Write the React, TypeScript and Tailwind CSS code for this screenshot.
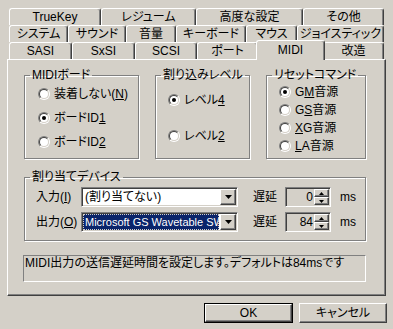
import React from "react";

const base =
  "[font-family:'Liberation_Sans','Noto_Sans_CJK_JP',sans-serif] [font-feature-settings:'palt'] text-[12px] leading-[14px] text-black";

const tabCls =
  "flex items-center justify-center bg-[#d4d0c8] border-t border-l border-white border-r border-r-[#404040] rounded-t-[3px] shadow-[inset_-1px_0_#808080] whitespace-nowrap";

function Tab({ w, label }: { w: string; label: string }) {
  return <div className={`h-[17px] ${w} ${tabCls}`}>{label}</div>;
}

function SelTab({ w, label }: { w: string; label: string }) {
  return (
    <div className={`relative z-10 -mx-[2px] -mb-[1px] h-[20px] pb-[2px] ${w} ${tabCls}`}>
      {label}
    </div>
  );
}

function Radio({ checked }: { checked?: boolean }) {
  return (
    <span className="w-[12px] h-[12px] shrink-0 flex rounded-full border border-t-[#808080] border-l-[#808080] border-b-white border-r-white">
      <span className="flex-1 flex items-center justify-center rounded-full border border-t-[#404040] border-l-[#404040] border-b-[#d4d0c8] border-r-[#d4d0c8] bg-white">
        {checked && <span className="w-[4px] h-[4px] rounded-full bg-black" />}
      </span>
    </span>
  );
}

function RadioRow({ checked, children }: { checked?: boolean; children: React.ReactNode }) {
  return (
    <div className="h-[16px] flex items-center gap-[4px] whitespace-nowrap">
      <Radio checked={checked} />
      <span>{children}</span>
    </div>
  );
}

const groupCls =
  "border border-[#808080] shadow-[inset_1px_1px_#ffffff,1px_1px_#ffffff] p-0 m-0 min-w-0";

function Legend({ children }: { children: React.ReactNode }) {
  return <legend className="ml-[5px] px-[2px] leading-[12px] whitespace-nowrap">{children}</legend>;
}

function Tri({ w, h }: { w: number; h: number }) {
  return (
    <svg width={w} height={h} viewBox={`0 0 ${w} ${h}`} className="block">
      <polygon points={`0,0 ${w},0 ${w / 2},${h}`} fill="#000" />
    </svg>
  );
}

function TriUp({ w, h }: { w: number; h: number }) {
  return (
    <svg width={w} height={h} viewBox={`0 0 ${w} ${h}`} className="block">
      <polygon points={`0,${h} ${w},${h} ${w / 2},0`} fill="#000" />
    </svg>
  );
}

const raised =
  "bg-[#d4d0c8] border border-t-white border-l-white border-b-[#404040] border-r-[#404040] shadow-[inset_-1px_-1px_#808080]";

const sunken =
  "border border-t-[#808080] border-l-[#808080] border-b-white border-r-white shadow-[inset_1px_1px_#404040,inset_-1px_-1px_#d4d0c8]";

function Combo({ text, selected }: { text: string; selected?: boolean }) {
  return (
    <div className={`w-[157px] h-[20px] bg-white ${sunken} p-[1px] flex`}>
      <div className="flex-1 flex items-center overflow-hidden whitespace-nowrap pr-[1px]">
        {selected ? (
          <div className="w-full h-full bg-[#0a246a] text-white text-[11px] flex items-center pl-[2px] overflow-hidden outline-1 outline-dotted outline-[#d4d0c8] -outline-offset-1">
            {text}
          </div>
        ) : (
          <div className="pl-[2px]">{text}</div>
        )}
      </div>
      <div className={`w-[16px] h-full ${raised} flex items-center justify-center`}>
        <Tri w={7} h={4} />
      </div>
    </div>
  );
}

function Spin({ value }: { value: string }) {
  return (
    <div className={`w-[46px] h-[20px] bg-[#d4d0c8] ${sunken} p-[1px] flex`}>
      <div className="flex-1 flex items-center justify-end pr-[1px]">{value}</div>
      <div className="w-[15px] flex flex-col">
        <div className={`flex-1 ${raised} flex items-center justify-center`}>
          <TriUp w={5} h={3} />
        </div>
        <div className={`flex-1 ${raised} flex items-center justify-center`}>
          <Tri w={5} h={3} />
        </div>
      </div>
    </div>
  );
}

export default function App() {
  return (
    <div className={`w-[393px] h-[329px] bg-[#d4d0c8] pt-[8px] overflow-hidden ${base}`}>
      {/* tab rows */}
      <div className="ml-[9px] flex">
        <Tab w="w-[92px]" label="TrueKey" />
        <Tab w="w-[95px]" label="レジューム" />
        <Tab w="w-[107px]" label="高度な設定" />
        <Tab w="w-[81px]" label="その他" />
      </div>
      <div className="ml-[9px] flex">
        <Tab w="w-[59px]" label="システム" />
        <Tab w="w-[58px]" label="サウンド" />
        <Tab w="w-[50px]" label="音量" />
        <Tab w="w-[70px]" label="キーボード" />
        <Tab w="w-[51px]" label="マウス" />
        <Tab w="w-[87px]" label="ジョイスティック" />
      </div>
      <div className="ml-[9px] flex items-end h-[17px]">
        <Tab w="w-[63px]" label="SASI" />
        <Tab w="w-[63px]" label="SxSI" />
        <Tab w="w-[62px]" label="SCSI" />
        <Tab w="w-[61px]" label="ポート" />
        <SelTab w="w-[69px]" label="MIDI" />
        <Tab w="w-[61px]" label="改造" />
      </div>

      {/* panel */}
      <div className="ml-[7px] w-[379px] h-[237px] border border-t-white border-l-white border-r-[#404040] border-b-[#404040] shadow-[inset_-1px_-1px_#808080] pl-[16px] pt-[9px]">
        <div className="flex items-start gap-[16px]">
          <fieldset className={`w-[115px] h-[90px] ${groupCls}`}>
            <Legend>MIDIボード</Legend>
            <div className="pl-[13px] pt-[5px] flex flex-col gap-[8px]">
              <RadioRow>
                装着しない(<span className="underline">N</span>)
              </RadioRow>
              <RadioRow checked>
                ボードID<span className="underline">1</span>
              </RadioRow>
              <RadioRow>
                ボードID<span className="underline">2</span>
              </RadioRow>
            </div>
          </fieldset>
          <fieldset className={`w-[95px] h-[90px] ${groupCls}`}>
            <Legend>割り込みレベル</Legend>
            <div className="pl-[12px] pt-[11px] flex flex-col gap-[20px]">
              <RadioRow checked>
                レベル<span className="underline">4</span>
              </RadioRow>
              <RadioRow>
                レベル<span className="underline">2</span>
              </RadioRow>
            </div>
          </fieldset>
          <fieldset className={`w-[100px] h-[90px] ${groupCls}`}>
            <Legend>リセットコマンド</Legend>
            <div className="pl-[12px] pt-[3px] flex flex-col gap-[2px]">
              <RadioRow checked>
                G<span className="underline">M</span>音源
              </RadioRow>
              <RadioRow>
                G<span className="underline">S</span>音源
              </RadioRow>
              <RadioRow>
                <span className="underline">X</span>G音源
              </RadioRow>
              <RadioRow>
                <span className="underline">L</span>A音源
              </RadioRow>
            </div>
          </fieldset>
        </div>

        <fieldset className={`mt-[12px] w-[342px] h-[70px] ${groupCls}`}>
          <Legend>割り当てデバイス</Legend>
          <div className="pl-[11px] pt-[4px] flex flex-col gap-[5px]">
            <div className="flex items-center h-[20px]">
              <span className="w-[45px] whitespace-nowrap">
                入力(<span className="underline">I</span>)
              </span>
              <Combo text="(割り当てない)" />
              <span className="ml-[15px] w-[32px]">遅延</span>
              <Spin value="0" />
              <span className="ml-[9px]">ms</span>
            </div>
            <div className="flex items-center h-[20px]">
              <span className="w-[45px] whitespace-nowrap">
                出力(<span className="underline">O</span>)
              </span>
              <Combo text="Microsoft GS Wavetable SW Synth" selected />
              <span className="ml-[15px] w-[32px]">遅延</span>
              <Spin value="84" />
              <span className="ml-[9px]">ms</span>
            </div>
          </div>
        </fieldset>

        <div className="mt-[14px] -ml-[1px] w-[343px] h-[27px] border border-t-[#808080] border-l-[#808080] border-b-white border-r-white pl-[1px] whitespace-nowrap">
          MIDI出力の送信遅延時間を設定します。デフォルトは84msです
        </div>
      </div>

      {/* buttons */}
      <div className="mt-[7px] flex justify-end gap-[6px] pr-[6px]">
        <div className="w-[89px] h-[20px] border border-black flex">
          <div className={`flex-1 ${raised} flex items-center justify-center`}>OK</div>
        </div>
        <div className={`w-[88px] h-[20px] ${raised} flex items-center justify-center`}>キャンセル</div>
      </div>
    </div>
  );
}
